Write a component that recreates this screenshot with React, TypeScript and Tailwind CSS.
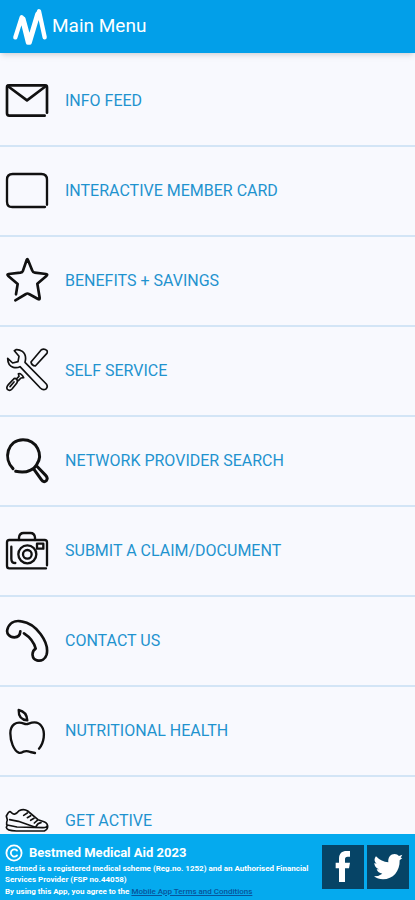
import type { ReactNode } from "react"

type MenuItem = {
  label: string
  strokeWidth: number
  icon: ReactNode
}

const menuItems: MenuItem[] = [
  {
    label: "Info Feed",
    strokeWidth: 8,
    icon: (
      <>
        <path d="M141 140V64q0-6-6-6H27q-6 0-6 6v78q0 7 7 7h106" />
        <path d="M23 60l58 43 57-43" />
      </>
    ),
  },
  {
    label: "Interactive Member Card",
    strokeWidth: 7,
    icon: <path d="M141 146V71q0-17-17-17H38q-17 0-17 17v66q0 16 16 16h98" />,
  },
  {
    label: "Benefits + Savings",
    strokeWidth: 8,
    icon: <path d="M46 163l32-19q4-3 9 0l27 15q6 3 5-4l-7-42 28-24q4-4-2-5l-34-4q-5 0-7-6L84 42q-2-6-4 0L69 74q-2 5-8 6l-35 4q-6 1-2 5l29 25-5 31" />,
  },
  {
    label: "Self Service",
    strokeWidth: 5,
    icon: (
      <>
        <path d="M23 67q0 22 17 27 11 3 20-2l61 64q8 8 17 3 7-7 1-15L75 79q6-22-8-33-9-6-19-5l-5 3 14 17-3 16-16 4-15-14z" />
        <path d="M93 78l31-37q9-5 17 3 2 5-1 9l-34 37q-11-1-13-12z" />
        <path d="M50 129q-6-4-10 1l-15 16q-7 8-3 14 7 6 14-1l14-17q4-6 0-13z" />
        <path d="M49 129l8-8-2-8q8-3 16 12l-8 1-8 8" />
        <path d="M42 138l-12 14" />
      </>
    ),
  },
  {
    label: "Network Provider Search",
    strokeWidth: 9,
    icon: (
      <>
        <path d="M39 128C9 98 22 42 69 41c41 0 62 45 41 75q-8 13-20 17c-15 8-29 6-43 3" />
        <path d="M102 130l22 31q7 10 15 3 6-8-2-16l-27-28" />
      </>
    ),
  },
  {
    label: "Submit a Claim/Document",
    strokeWidth: 7,
    icon: (
      <>
        <path d="M141 148V79q0-7-7-7H28q-7 0-7 7v71q0 7 7 7h110" />
        <path d="M57 72v-7q1-14 14-14h20q13 0 14 14v7" />
        <circle cx="82" cy="115" r="27" />
        <circle cx="82" cy="115" r="13" />
        <path d="M34 92v36q0 13 12 13M111 83h19v15h-19z" />
      </>
    ),
  },
  {
    label: "Contact Us",
    strokeWidth: 8,
    icon: <path d="M61 76q-1 17-18 18c-15 0-24-12-21-23 5-19 20-29 42-25 46 6 84 64 76 99-4 15-16 21-29 18-16-4-18-26-4-35q-7-28-35-46" />,
  },
  {
    label: "Nutritional Health",
    strokeWidth: 7,
    icon: (
      <>
        <path d="M117 158c15-17 20-50 8-67-8-12-22-15-39-8q-7 3-14 0C48 74 31 87 31 112c0 24 10 51 25 58q6 2 14-3 10-4 21 1l14 3" />
        <path d="M56 42q-1 29 26 31-2-26-26-31z" />
      </>
    ),
  },
  {
    label: "Get Active",
    strokeWidth: 5,
    icon: (
      <>
        <path d="M20 116q-1-8 2-14l-3-12 6-10q5-6 8-1 10 13 24-5 15-7 26 1l31 26 18 6q12 5 11 16-1 8-10 12H49q-29-1-30-11l3-7 29 6 78 2q12 0 13-7" />
        <path d="M71 88l11-7M82 95l10-6M92 103l10-6M103 111l9-8M29 101l26 5 49 17M108 122q5-11 15-12" />
      </>
    ),
  },
]

function MenuRow({ label, strokeWidth, icon }: MenuItem) {
  return (
    <li className="border-b-2 border-[#d3e5f6]">
      <button type="button" className="flex h-[88px] w-full items-center gap-4 pl-[5px] text-left">
        <svg
          viewBox="15 33 132 144"
          className="h-12 w-11 shrink-0"
          fill="none"
          stroke="#111111"
          strokeWidth={strokeWidth}
          strokeLinecap="round"
          strokeLinejoin="round"
          aria-hidden="true"
        >
          {icon}
        </svg>
        <span className="text-base text-[#1f93cf] uppercase">{label}</span>
      </button>
    </li>
  )
}

function Header() {
  return (
    <header className="relative z-10 flex h-[53px] shrink-0 items-center gap-1 bg-[#029fe9] pl-3 text-white shadow-md">
      <svg
        viewBox="36 22 108 114"
        className="h-[38px] w-9"
        fill="none"
        stroke="currentColor"
        strokeWidth="13"
        strokeLinecap="round"
        strokeLinejoin="round"
        aria-hidden="true"
      >
        <path d="M46 110l19-60 19 76h5l28-94 17 78" />
        <path d="M70 54l18 66 24-80" />
      </svg>
      <h1 className="text-[19px]">Main Menu</h1>
    </header>
  )
}

function Footer() {
  return (
    <footer className="flex h-[66px] shrink-0 items-center justify-between bg-[#05aaee] pr-1.5 pl-[5px] text-white">
      <div className="min-w-0 pt-1.5 whitespace-nowrap">
        <div className="flex items-center gap-1.5">
          <svg
            viewBox="0 0 18 18"
            className="size-[18px]"
            fill="none"
            stroke="currentColor"
            strokeWidth="1.8"
            strokeLinecap="round"
            aria-hidden="true"
          >
            <circle cx="9" cy="9" r="7.6" />
            <path d="M12 6.500C9.500 4 5.800 6 5.800 9s3.700 5 6.200 2.500" />
          </svg>
          <p className="text-[13px] leading-5 font-bold">Bestmed Medical Aid 2023</p>
        </div>
        <p className="text-[8px] leading-[11px] font-bold">
          Bestmed is a registered medical scheme (Reg.no. 1252) and an Authorised Financial
          <br />
          Services Provider (FSP no.44058)
        </p>
        <p className="text-[8px] leading-[13px] font-bold">
          By using this App, you agree to the{" "}
          <a href="#terms" className="font-medium text-[#07549b] underline">
            Mobile App Terms and Conditions
          </a>
        </p>
      </div>
      <div className="flex shrink-0 gap-[3px]">
        <a href="#facebook" aria-label="Facebook" className="h-11 w-[42px] bg-[#064466]">
          <svg viewBox="37 33 126 132" className="h-11 w-[42px]" fill="currentColor" aria-hidden="true">
            <path d="M88 144V103H78V86h10V74c0-16 9-23 23-23h10v17h-7c-6 0-8 3-8 8v10h15l-3 17h-12v41z" />
          </svg>
        </a>
        <a href="#twitter" aria-label="Twitter" className="h-11 w-[42px] bg-[#064466]">
          <svg viewBox="170 33 126 132" className="h-11 w-[42px]" fill="currentColor" aria-hidden="true">
            <path d="M197 67q16 17 37 18c-2-15 7-25 19-25q8 0 13 6l10-4-5 9 5 1-8 7c1 33-20 57-50 57q-16 0-27-9 15 0 25-8-13-2-17-13h7q-14-6-14-19l7 2c-9-7-7-16-2-22z" />
          </svg>
        </a>
      </div>
    </footer>
  )
}

export default function App() {
  return (
    <div className="flex h-screen flex-col bg-[#f8f9fe] font-['Roboto',sans-serif]">
      <Header />
      <main className="min-h-0 flex-1 overflow-hidden pt-1">
        <nav aria-label="Main menu">
          <ul>
            {menuItems.map((item) => (
              <MenuRow key={item.label} {...item} />
            ))}
          </ul>
        </nav>
      </main>
      <Footer />
    </div>
  )
}
